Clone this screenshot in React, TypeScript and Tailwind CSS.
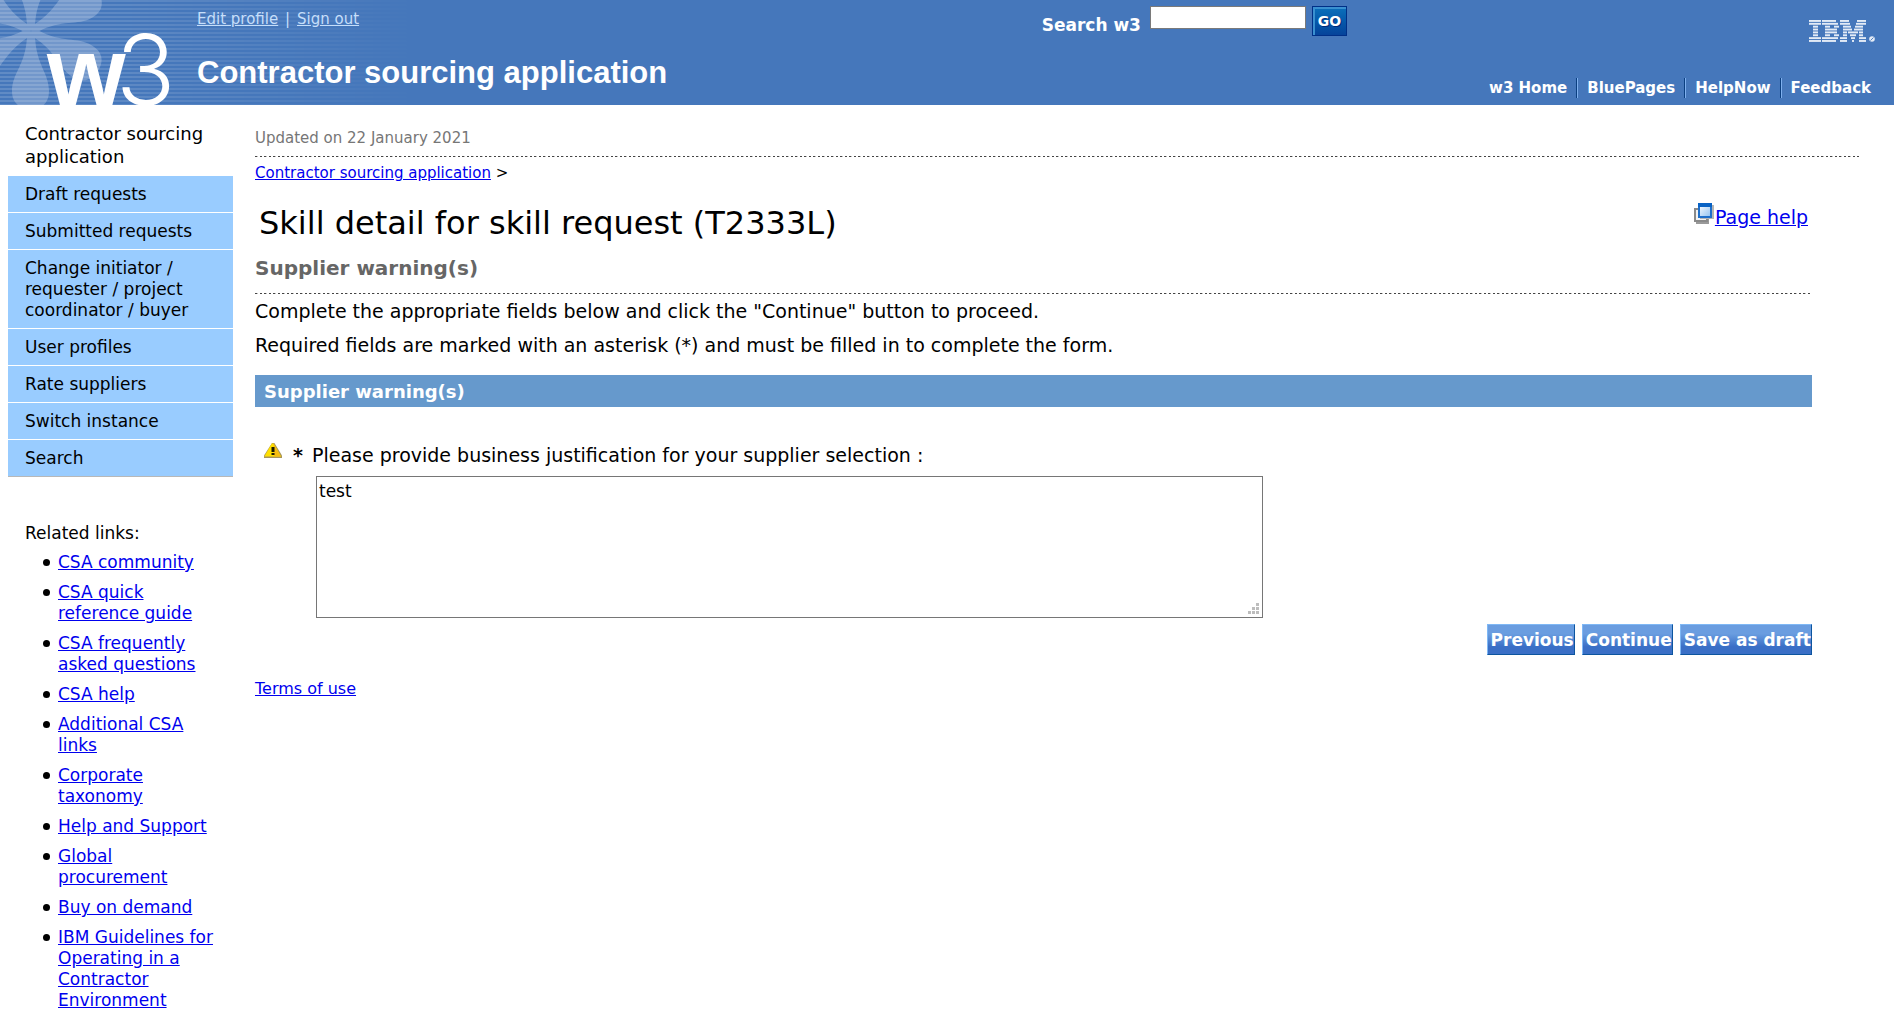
const SIDE_NAV = [
  'Draft requests',
  'Submitted requests',
  'Change initiator / requester / project coordinator / buyer',
  'User profiles',
  'Rate suppliers',
  'Switch instance',
  'Search',
];

const RELATED = [
  'CSA community',
  'CSA quick reference guide',
  'CSA frequently asked questions',
  'CSA help',
  'Additional CSA links',
  'Corporate taxonomy',
  'Help and Support',
  'Global procurement',
  'Buy on demand',
  'IBM Guidelines for Operating in a Contractor Environment',
];

const TOP_LINKS = ['w3 Home', 'BluePages', 'HelpNow', 'Feedback'];

const PETAL_ANGLES = [0, 60, 120, 180, 240, 300];

/* Each row of the eight-bar logo: pairs of start and end positions. */
const IBM_ROWS = [
  [[0, 12], [13, 27], [31, 40], [48, 57]],
  [[0, 12], [13, 29], [31, 41], [47, 57]],
  [[4, 9], [16, 21], [25, 30], [34, 42], [46, 54]],
  [[4, 9], [16, 28], [34, 43], [45, 54]],
  [[4, 9], [16, 28], [34, 38], [39, 49], [50, 54]],
  [[4, 9], [16, 21], [25, 30], [34, 38], [41, 47], [50, 54]],
  [[0, 12], [13, 29], [31, 38], [42, 46], [50, 57]],
  [[0, 12], [13, 27], [31, 38], [43, 45], [50, 57]],
];

function IbmLogo() {
  return (
    <svg width="66" height="22" viewBox="0 0 66 22" role="img" aria-label="IBM">
      {IBM_ROWS.map((row, r) =>
        row.map(([a, b]) => (
          <rect key={`${r}-${a}`} x={a} y={r * 2.86} width={b - a} height="1.9" fill="#e3ebf6" />
        )),
      )}
      <circle cx="63" cy="19" r="2.8" fill="#e3ebf6" />
      <path d="M61.5 20.5l3-3" stroke="#4577bb" strokeWidth="0.9" />
    </svg>
  );
}

function HeaderArt() {
  return (
    <svg className="absolute left-0 top-0" width="420" height="105" viewBox="0 0 420 105" aria-hidden="true">
      <defs>
        <linearGradient id="fade" x1="0" x2="1" y1="0" y2="0">
          <stop offset="0" stopColor="#fff" stopOpacity="1" />
          <stop offset="0.3" stopColor="#fff" stopOpacity="0.9" />
          <stop offset="1" stopColor="#fff" stopOpacity="0" />
        </linearGradient>
        <mask id="fadeMask">
          <rect width="420" height="105" fill="url(#fade)" />
        </mask>
        <pattern id="lines" width="4" height="4" patternUnits="userSpaceOnUse">
          <rect width="4" height="2" fill="#fff" fillOpacity="0.15" />
        </pattern>
      </defs>
      <g fill="#fff" opacity="0.24">
        {PETAL_ANGLES.map((a) => (
          <path
            key={a}
            transform={`translate(31 31) rotate(${a})`}
            d="M-4 5C-5 34 -19 42 -19 60C-19 72 -11 78 0 78C11 78 18 72 18 60C18 42 5 34 4 5L0 0Z"
          />
        ))}
      </g>
      <rect width="420" height="105" fill="url(#lines)" mask="url(#fadeMask)" />
      <text x="47" y="107" fontFamily="Liberation Sans, Arial, sans-serif" fontWeight="700" fontSize="101" fill="#fff">
        w
      </text>
      <text x="116" y="105" fontFamily="Inter, sans-serif" fontWeight="300" fontSize="98" fill="#fff">
        3
      </text>
    </svg>
  );
}

function PopupIcon() {
  return (
    <svg width="21" height="21" viewBox="0 0 21 21" aria-hidden="true">
      <defs>
        <linearGradient id="pane" x1="0" x2="1" y1="0" y2="1">
          <stop offset="0" stopColor="#fff" />
          <stop offset="1" stopColor="#8fc0f0" />
        </linearGradient>
      </defs>
      <rect x="2" y="7" width="13" height="14" fill="#9a9a9a" />
      <rect x="1" y="6" width="12" height="12" fill="#f2f2f2" stroke="#8a8a8a" strokeWidth="2" />
      <rect x="6" y="2" width="14" height="14" fill="#b5b5b5" />
      <rect x="5" y="1" width="12" height="13" fill="url(#pane)" stroke="#1f6fca" strokeWidth="2" />
      <rect x="4" y="0" width="14" height="4" fill="#0862c4" />
    </svg>
  );
}

function WarningIcon() {
  return (
    <svg width="18" height="15" viewBox="0 0 18 15" role="img" aria-label="Warning">
      <path d="M8 0h2.400L18 12.500V15H0v-2.500Z" fill="#a8965a" />
      <path d="M7.800 0.500h1.800L17 13.500H0.300Z" fill="#ffe000" />
      <path d="M9.600 0.500L17 13.500H10Z" fill="#f6bd10" />
      <rect x="7.500" y="4" width="3" height="5" fill="#1a1a00" />
      <rect x="7.500" y="10" width="3" height="2" fill="#1a1a00" />
    </svg>
  );
}

function Dashes() {
  return (
    <div className="h-px bg-[repeating-linear-gradient(90deg,#444_0_2px,#bbb_2px_3px,#fff_3px_5px,#444_5px_7px,#fff_7px_9px)]" />
  );
}

function ActionButton({ label }: { label: string }) {
  return (
    <button
      type="button"
      className="h-[31px] border border-t-[#7fb8f5] border-l-[#7fb8f5] border-r-[#0d559f] border-b-[#0d559f] bg-linear-to-b from-[#6a9de0] from-30% to-[#3a6fc6] to-75% pl-[3px] text-[17px] font-bold leading-[24px] text-white"
    >
      {label}
    </button>
  );
}

export default function App() {
  return (
    <div className="min-h-screen bg-white font-['DejaVu_Sans',Verdana,sans-serif] text-black">
      <header className="relative grid h-[105px] grid-cols-[55%_1fr_auto] bg-[#4577bb] text-white">
        <HeaderArt />
        <div className="relative pl-[197px] pt-[9px]">
          <p className="text-[15px] leading-[20px] text-[#c5defa]">
            <a href="#profile" className="mr-[2px] underline">Edit profile</a> |
            <a href="#signout" className="ml-[7px] underline">Sign out</a>
          </p>
          <p className="mt-[25px] font-['Liberation_Sans',Arial,sans-serif] text-[31px] font-bold leading-[38px]">
            Contractor sourcing application
          </p>
        </div>
        <form className="flex items-start pt-[6px]" onSubmit={(e) => e.preventDefault()}>
          <label htmlFor="w3search" className="mr-[9px] mt-[7px] text-[17px] font-bold leading-[24px]">
            Search w3
          </label>
          <input
            id="w3search"
            type="text"
            className="h-[23px] w-[156px] border border-[#7a7a7a] bg-white px-1 text-[15px] text-black"
          />
          <button
            type="submit"
            className="ml-[6px] h-[30px] w-[35px] border border-[#003087] bg-linear-to-b from-[#0c70bb] to-[#05439a] text-[14px] font-bold leading-none text-white shadow-[inset_2px_2px_0_#3a90d0] text-shadow-[1px_1px_0_#002a78]"
          >
            GO
          </button>
        </form>
        <div className="flex flex-col items-end justify-between pb-[7px] pr-[19px] pt-[20px]">
          <IbmLogo />
          <nav aria-label="w3" className="flex pr-1">
            {TOP_LINKS.map((t, i) => (
              <span key={t} className="flex">
                {i > 0 && <span className="mx-[9px] h-[20px] w-[2px] border-l border-r border-l-[#0b3f80] border-r-[#7fb0ee]" />}
                <a href="#top" className="text-[15px] font-bold leading-[20px]">{t}</a>
              </span>
            ))}
          </nav>
        </div>
      </header>

      <div className="flex items-start">
        <aside className="w-[233px] shrink-0 pl-2 pt-[17px]">
          <p className="pl-[17px] text-[18px] leading-[23px]">Contractor sourcing application</p>
          <nav aria-label="Application" className="mt-2 border-b border-[#b8b8b8]">
            <ul className="flex flex-col gap-px">
              {SIDE_NAV.map((t) => (
                <li key={t} className="bg-[#99ccff]">
                  <a href="#nav" className="block pb-[7px] pl-[17px] pr-4 pt-2 text-[17px] leading-[21px]">{t}</a>
                </li>
              ))}
            </ul>
          </nav>
          <p className="mt-[46px] pl-[17px] text-[17px] leading-[21px]">Related links:</p>
          <ul className="mt-2 flex flex-col gap-[9px] pl-[35px] pr-[15px] text-[17px] leading-[21px]">
            {RELATED.map((t) => (
              <li key={t} className="flex gap-2">
                <span className="mt-[7px] size-[7px] shrink-0 rounded-full bg-black" />
                <a href="#related" className="text-[#0000ee] underline">{t}</a>
              </li>
            ))}
          </ul>
        </aside>

        <main className="min-w-0 flex-1 pl-[22px] pr-[35px] pt-6">
          <p className="mb-[9px] text-[15px] leading-[18px] text-[#767676]">Updated on 22 January 2021</p>
          <Dashes />
          <p className="mt-[7px] text-[15px] leading-[18px]">
            <a href="#app" className="text-[#0000ee] underline">Contractor sourcing application</a> &gt;
          </p>
          <div className="pr-[47px]">
            <div className="mt-[21px] flex items-start justify-between pl-1 pr-1">
              <h1 className="text-[32px] leading-[40px]">Skill detail for skill request (T2333L)</h1>
              <a href="#help" className="flex text-[19px] leading-[24px] text-[#0000ee]">
                <PopupIcon />
                <span className="mt-[2px] underline">Page help</span>
              </a>
            </div>
            <h2 className="mb-[13px] mt-[13px] text-[20px] font-bold leading-[24px] text-[#666]">Supplier warning(s)</h2>
            <div className="mr-[2px]">
              <Dashes />
            </div>
            <p className="mt-[5px] text-[19px] leading-[24px]">
              Complete the appropriate fields below and click the "Continue" button to proceed.
            </p>
            <p className="mt-[10px] text-[19px] leading-[24px]">
              Required fields are marked with an asterisk (*) and must be filled in to complete the form.
            </p>
            <h3 className="mt-[18px] bg-[#6699cc] px-[9px] pt-px text-[18px] font-bold leading-[31px] text-white">
              Supplier warning(s)
            </h3>
            <form onSubmit={(e) => e.preventDefault()}>
              <div className="mt-[36px] flex pl-[9px] text-[19px] leading-[24px]">
                <WarningIcon />
                <label htmlFor="justification" className="ml-[11px]">
                  <b className="mr-[3px]">*</b> Please provide business justification for your supplier selection :
                </label>
              </div>
              <div className="relative ml-[61px] mt-[9px] h-[142px] w-[60.8%]">
                <textarea
                  id="justification"
                  defaultValue="test"
                  className="block size-full resize-none border border-[#767676] bg-white px-[2px] py-[3px] text-[17px] leading-[22px] outline-none"
                />
                <svg className="absolute bottom-[3px] right-[3px]" width="12" height="12" viewBox="0 0 12 12" fill="#bdbdbd" aria-hidden="true">
                  <path d="M8 0h3v3h-3zM4 4h3v3h-3zM8 4h3v3h-3zM0 8h3v3h-3zM4 8h3v3h-3zM8 8h3v3h-3z" />
                </svg>
              </div>
              <div className="mt-[6px] flex justify-end gap-[7px]">
                <ActionButton label="Previous" />
                <ActionButton label="Continue" />
                <ActionButton label="Save as draft" />
              </div>
            </form>
          </div>
          <p className="mt-[24px] text-[16px] leading-[20px]">
            <a href="#terms" className="text-[#0000ee] underline">Terms of use</a>
          </p>
        </main>
      </div>
    </div>
  );
}
